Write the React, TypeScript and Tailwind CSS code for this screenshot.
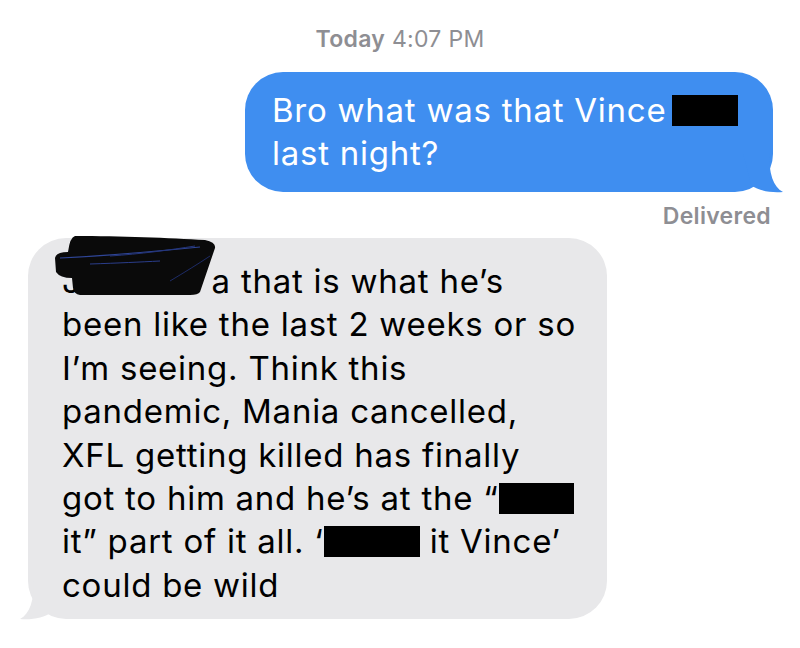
import React from 'react';

const Redact: React.FC<{ w: string }> = ({ w }) => (
  <span className={`inline-block h-[31px] bg-black align-[-4px] ${w}`} />
);

const Scribble: React.FC = () => (
  <svg className="absolute left-[-12px] top-[-28px]" width="170" height="66" viewBox="0 0 170 66">
    <path
      d="M25 4 C70 4 120 6 155 8 Q166 10 165 16 L150 60 Q148 63 140 63 L30 63 Q24 62 23 56 L22 46 Q10 46 6 40 L5 26 Q6 20 18 20 Q20 5 25 4 Z"
      fill="#0a0a0a"
    />
    <path d="M10 26 C50 24 100 20 150 15" stroke="#2f4596" strokeWidth="1.2" fill="none" />
    <path d="M40 32 C70 31 90 30 110 29" stroke="#2a3d8a" strokeWidth="1" fill="none" />
    <path d="M60 24 C90 22 120 18 145 14" stroke="#24357a" strokeWidth="1" fill="none" />
    <path d="M120 49 C135 40 148 32 160 24" stroke="#1d2b66" strokeWidth="1" fill="none" />
  </svg>
);

export default function App() {
  return (
    <div className="w-[800px] h-[648px] bg-white overflow-hidden font-['Inter','Liberation_Sans',sans-serif]">
      <div className="pt-[25px] text-center text-[23px] text-[#8e8e93] leading-[28px] tracking-[0.3px]">
        <span className="font-semibold">Today</span> 4:07 PM
      </div>

      <div className="flex justify-end pr-[27px] mt-[19px]">
        <div className="relative w-[528px] h-[120px] rounded-[38px] bg-[#3f8ef0] pl-[27px] pt-[17px] text-white text-[33px] leading-[43px] tracking-[0.75px]">
          <div className="whitespace-nowrap">
            Bro what was that Vince <span className="ml-[-4px]"><Redact w="w-[66px]" /></span>
          </div>
          <div className="whitespace-nowrap">last night?</div>
          <svg className="absolute right-[-10px] bottom-[-1px]" width="40" height="40" viewBox="0 0 40 40">
            <path d="M0 0 L26 0 C26 20 30 34 40 39 C28 40 16 38 8 32 Z" fill="#3f8ef0" />
          </svg>
        </div>
      </div>

      <div className="flex justify-end pr-[29px] mt-[10px] text-[23px] font-semibold text-[#8e8e93] leading-[28px] tracking-[0.3px]">
        Delivered
      </div>

      <div className="pl-[28px] mt-[8px]">
        <div className="relative w-[579px] h-[381px] rounded-[38px] bg-[#e8e8ea] pl-[34px] pt-[22px] text-black text-[33px] leading-[43.4px] tracking-[0.75px]">
          <div className="relative whitespace-nowrap">
            J<span className="inline-block w-[130px]" />a that is what he’s
            <Scribble />
          </div>
          <div className="whitespace-nowrap">been like the last 2 weeks or so</div>
          <div className="whitespace-nowrap">I’m seeing. Think this</div>
          <div className="whitespace-nowrap">pandemic, Mania cancelled,</div>
          <div className="whitespace-nowrap">XFL getting killed has finally</div>
          <div className="whitespace-nowrap">
            got to him and he’s at the “<Redact w="w-[75px]" />
          </div>
          <div className="whitespace-nowrap">
            it” part of it all. ‘<Redact w="w-[96px]" /> it Vince’
          </div>
          <div className="whitespace-nowrap">could be wild</div>
          <svg className="absolute left-[-8px] bottom-[-1px]" width="40" height="40" viewBox="0 0 40 40">
            <path d="M40 0 L14 0 C14 20 10 34 0 39 C12 40 24 38 32 32 Z" fill="#e8e8ea" />
          </svg>
        </div>
      </div>
    </div>
  );
}
